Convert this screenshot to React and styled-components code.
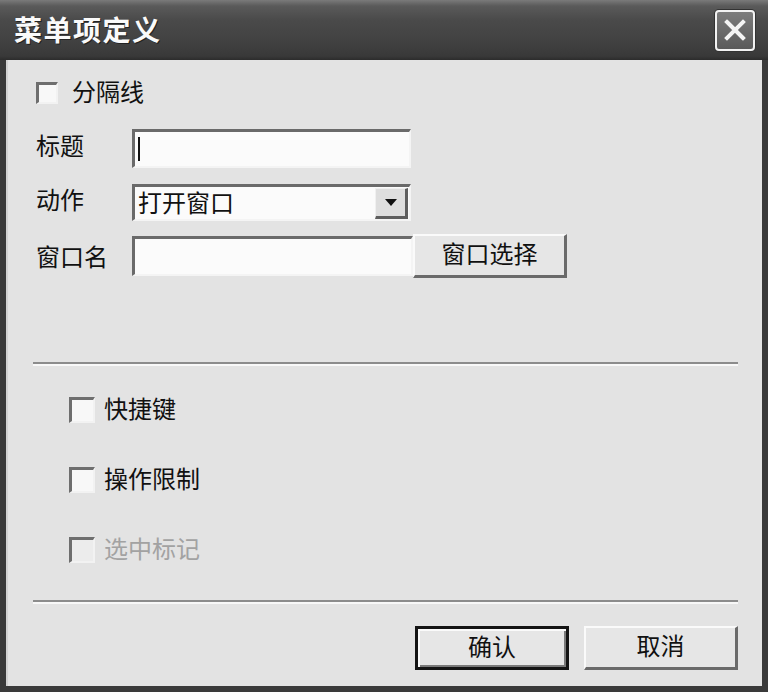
import React from "react";
import styled, { createGlobalStyle } from "styled-components";

const GlobalStyle = createGlobalStyle`
  html, body {
    margin: 0;
    padding: 0;
    background: #2e2e2e;
  }
  #root {
    width: 768px;
    height: 692px;
  }
`;

const font = `"Noto Sans CJK SC", "Noto Sans", sans-serif`;
const textSize = 24;

const Window = styled.div`
  width: 768px;
  height: 692px;
  display: flex;
  flex-direction: column;
  font-family: ${font};
  overflow: hidden;
  background: #3a3a3a;
`;

const TitleBar = styled.div`
  height: 60px;
  flex: none;
  display: flex;
  align-items: center;
  justify-content: space-between;
  padding: 0 13px 0 14px;
  box-sizing: border-box;
  background: linear-gradient(
    to bottom,
    #7a7a7a 0px,
    #5a5a5a 6px,
    #4a4a4a 20px,
    #424242 40px,
    #393939 56px,
    #2c2c2c 60px
  );
`;

const Title = styled.h1`
  margin: 0;
  color: #fafafa;
  font-size: 28px;
  font-weight: 700;
  letter-spacing: 1.5px;
  line-height: 1;
  text-shadow: 1px 1px 0 #222;
  padding-bottom: 2px;
`;

const CloseButton = styled.button`
  width: 40px;
  height: 41px;
  padding: 0;
  border: 2px solid #f2f2f2;
  border-radius: 4px;
  background: linear-gradient(to bottom, #7c7c7c, #5a5a5a);
  display: flex;
  align-items: center;
  justify-content: center;
  box-shadow: 0 0 0 1px #333;
`;

const Body = styled.div`
  flex: 1;
  display: flex;
  flex-direction: column;
  background: #e3e3e3;
  margin: 0 6px 6px 6px;
  border-left: 2px solid #d2d2d2;
  padding: 0 24px 0 25px;
`;

const Form = styled.div`
  display: grid;
  grid-template-columns: 96px 1fr;
  align-items: center;
  padding-left: 3px;
`;

const CheckRow = styled.label`
  display: flex;
  align-items: center;
  gap: ${(p) => p.gap || 14}px;
  height: 26px;
  font-size: ${textSize}px;
  color: ${(p) => (p.disabled ? "#a2a2a2" : "#111")};
  grid-column: ${(p) => (p.span ? "1 / span 2" : "auto")};
  margin-top: ${(p) => p.top || 0}px;
`;

const CheckText = styled.span`
  margin-bottom: 5px;
`;

const Box = styled.span`
  width: ${(p) => p.size}px;
  height: ${(p) => p.size}px;
  box-sizing: border-box;
  border-style: solid;
  border-width: 3px 2px 2px 3px;
  border-color: #6e6e6e #f2f2f2 #f2f2f2 #6e6e6e;
  background: ${(p) => (p.disabled ? "#ececec" : "#f8f8f8")};
  flex: none;
`;

const Label = styled.span`
  font-size: ${textSize}px;
  line-height: 1;
  color: #111;
  margin-top: ${(p) => p.top || 0}px;
  padding-bottom: ${(p) => p.lift ?? 7}px;
`;

const Field = styled.div`
  display: flex;
  align-items: center;
  margin-top: ${(p) => p.top || 0}px;
`;

const TextBox = styled.div`
  width: ${(p) => p.w || 279}px;
  height: ${(p) => p.h}px;
  box-sizing: border-box;
  border-style: solid;
  border-width: 3px 2px 2px 3px;
  border-color: #6a6a6a #f4f4f4 #f4f4f4 #6a6a6a;
  background: #fbfbfb;
  display: flex;
  align-items: center;
  padding-left: 3px;
  font-size: ${textSize}px;
  color: #111;
`;

const Caret = styled.span`
  width: 2px;
  height: 24px;
  background: #111;
`;

const SelectText = styled.span`
  flex: 1;
  margin-bottom: 4px;
`;

const ArrowButton = styled.span`
  width: 33px;
  height: 31px;
  margin-right: 1px;
  box-sizing: border-box;
  border-style: solid;
  border-width: 1px 3px 3px 1px;
  border-color: #f0f0f0 #5e5e5e #5e5e5e #f0f0f0;
  background: #dedede;
  display: flex;
  align-items: center;
  justify-content: center;
`;

const PushButton = styled.button`
  width: ${(p) => p.w || 154}px;
  height: 44px;
  box-sizing: border-box;
  font-family: ${font};
  font-size: ${textSize}px;
  color: #111;
  background: #e6e6e6;
  border-style: solid;
  border-width: ${(p) => (p.primary ? "3px" : "2px 3px 3px 2px")};
  border-color: ${(p) =>
    p.primary ? "#141414" : "#fafafa #6a6a6a #6a6a6a #fafafa"};
  box-shadow: ${(p) =>
    p.primary ? "inset 2px 2px 0 #fafafa, inset -2px -2px 0 #7a7a7a" : "none"};
  padding: 0 0 5px 0;
  line-height: 1;
`;

const Separator = styled.hr`
  margin: ${(p) => p.top}px 0 0 0;
  height: 0;
  border: none;
  border-top: 2px solid #8c8c8c;
  border-bottom: 2px solid #f8f8f8;
`;

const Options = styled.div`
  display: flex;
  flex-direction: column;
  gap: 44px;
  margin-top: 31px;
  padding-left: 36px;
`;

const Footer = styled.div`
  display: flex;
  justify-content: flex-end;
  gap: 15px;
  margin-top: 22px;
`;

const CloseIcon = () => (
  <svg width="22" height="22" viewBox="0 0 22 22">
    <path
      d="M3 3 L19 19 M19 3 L3 19"
      stroke="#f4f4f4"
      strokeWidth="4"
      strokeLinecap="square"
    />
  </svg>
);

const DownArrow = () => (
  <svg width="12" height="7" viewBox="0 0 12 7">
    <path d="M0 0 H12 L6 7 Z" fill="#111" />
  </svg>
);

const App = () => {
  return (
    <>
      <GlobalStyle />
      <Window>
        <TitleBar>
          <Title>菜单项定义</Title>
          <CloseButton aria-label="关闭">
            <CloseIcon />
          </CloseButton>
        </TitleBar>
        <Body>
          <Form>
            <CheckRow span top={20} gap={14}>
              <Box size={22} />
              <CheckText>分隔线</CheckText>
            </CheckRow>

            <Label top={23}>标题</Label>
            <Field top={23}>
              <TextBox h={39}>
                <Caret />
              </TextBox>
            </Field>

            <Label top={16}>动作</Label>
            <Field top={16}>
              <TextBox h={37}>
                <SelectText>打开窗口</SelectText>
                <ArrowButton>
                  <DownArrow />
                </ArrowButton>
              </TextBox>
            </Field>

            <Label top={13} lift={0}>窗口名</Label>
            <Field top={13}>
              <TextBox h={40} w={281} />
              <PushButton>窗口选择</PushButton>
            </Field>
          </Form>

          <Separator top={84} />

          <Options>
            <CheckRow gap={9}>
              <Box size={26} />
              <CheckText>快捷键</CheckText>
            </CheckRow>
            <CheckRow gap={9}>
              <Box size={26} />
              <CheckText>操作限制</CheckText>
            </CheckRow>
            <CheckRow gap={9} disabled>
              <Box size={26} disabled />
              <CheckText>选中标记</CheckText>
            </CheckRow>
          </Options>

          <Separator top={37} />

          <Footer>
            <PushButton primary>确认</PushButton>
            <PushButton>取消</PushButton>
          </Footer>
        </Body>
      </Window>
    </>
  );
};

export default App;
